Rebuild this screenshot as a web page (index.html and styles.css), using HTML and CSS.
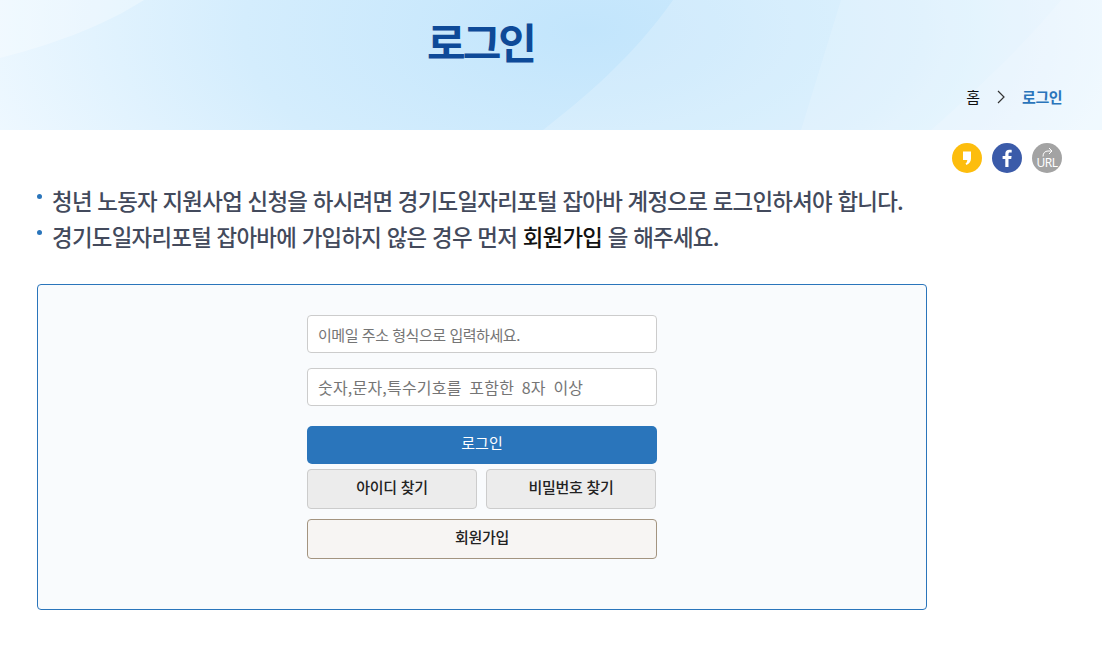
FILE: index.html
```html
<!DOCTYPE html>
<html lang="ko">
<head>
  <meta charset="UTF-8" />
  <title>로그인</title>
  <link rel="stylesheet" href="styles.css">
</head>
<body>
  <header class="banner">
    <svg class="banner-art" viewBox="0 0 1102 130" preserveAspectRatio="none" aria-hidden="true">
      <path d="M0 0H144C100 28 50 45 0 58Z" fill="#fff" fill-opacity="0.3"/>
      <path d="M543 130C585 97 632 58 673 0H1102V130Z" fill="#fff" fill-opacity="0.2"/>
      <path d="M801 130L841 0H1102V130Z" fill="#fff" fill-opacity="0.15"/>
      <path d="M931 130C970 95 1020 50 1061 0H1102V130Z" fill="#fff" fill-opacity="0.15"/>
    </svg>
    <div class="banner-inner">
      <h1>로그인</h1>
      <nav class="crumbs">
        <span class="crumb-home">홈</span>
        <svg class="crumb-sep" width="8" height="14" viewBox="0 0 8 14"><path d="M1 1l6 6-6 6" fill="none" stroke="#333" stroke-width="1.2"/></svg>
        <span class="crumb-now">로그인</span>
      </nav>
    </div>
  </header>

  <div class="share">
    <a class="share-btn kakao"><svg width="30" height="30" viewBox="0 0 30 30"><path d="M11 8.500h8v7c0 3-1.500 5-4.500 6.500l-1-1.500c1-.6 1.600-1.500 1.800-3.500H11z" fill="#fff"/></svg></a>
    <a class="share-btn fb"><svg width="30" height="30" viewBox="0 0 30 30"><path d="M16.500 24v-8h2.700l.4-3h-3.100v-1.900c0-.9.300-1.500 1.500-1.500h1.700V6.900c-.3 0-1.300-.1-2.400-.1-2.400 0-4 1.400-4 4.100V13h-2.700v3h2.700v8z" fill="#fff"/></svg></a>
    <a class="share-btn url">
      <svg class="url-arrow" width="11" height="10" viewBox="0 0 11 10"><path d="M1 9.500C1 6 3 4 6 4h4M7 1l3 3-3 3" fill="none" stroke="#fff" stroke-width="1"/></svg>
      <span>URL</span>
    </a>
  </div>

  <main class="content">
    <ul class="notice">
      <li>청년 노동자 지원사업 신청을 하시려면 경기도일자리포털 잡아바 계정으로 로그인하셔야 합니다.</li>
      <li>경기도일자리포털 잡아바에 가입하지 않은 경우 먼저 <b>회원가입</b> 을 해주세요.</li>
    </ul>

    <section class="login-box">
      <form class="login-form">
        <input class="field" type="text" placeholder="이메일 주소 형식으로 입력하세요.">
        <input class="field field-pw" type="password" placeholder="숫자,문자,특수기호를 포함한 8자 이상">
        <button class="btn btn-login" type="button">로그인</button>
        <div class="find-row">
          <button class="btn btn-find" type="button">아이디 찾기</button>
          <button class="btn btn-find" type="button">비밀번호 찾기</button>
        </div>
        <button class="btn btn-join" type="button">회원가입</button>
      </form>
    </section>
  </main>
</body>
</html>
```

FILE: styles.css
```css
body {
  margin: 0;
  background: #fff;
  font-family: "Noto Sans CJK KR", "Noto Sans", sans-serif;
  color: #434a5c;
}

.banner {
  position: relative;
  height: 130px;
  overflow: hidden;
  background: radial-gradient(ellipse 620px 300px at 585px 30px, #c2e5fc 0%, #d4edfd 55%, #eef8ff 100%);
  background-color: #eef8ff;
}

.banner-art {
  position: absolute;
  left: 0;
  top: 0;
  width: 100%;
  height: 100%;
}

.banner-inner {
  position: relative;
  height: 100%;
  padding: 0 40px 0 37px;
}

.banner h1 {
  width: 887px;
  margin: 0;
  padding-top: 11px;
  text-align: center;
  font-size: 42px;
  line-height: 60px;
  font-weight: 700;
  letter-spacing: -3px;
  color: #0e4a98;
}

.crumbs {
  display: flex;
  justify-content: flex-end;
  align-items: center;
  gap: 17px;
  margin-top: 15px;
  font-size: 15px;
  line-height: 22px;
}

.crumb-home {
  color: #111;
}

.crumb-now {
  color: #2a75bb;
  font-weight: 700;
  letter-spacing: -0.5px;
}

.share {
  display: flex;
  justify-content: flex-end;
  gap: 10px;
  padding: 13px 40px 0 0;
}

.share-btn {
  width: 30px;
  height: 30px;
  border-radius: 50%;
  display: flex;
  flex-direction: column;
  align-items: center;
  color: #fff;
}

.kakao { background: #fdbd0d; }
.fb { background: #3b5ba9; }
.url { background: #a3a3a3; }

.url-arrow {
  margin-top: 4px;
  display: block;
}

.url span {
  font-size: 12px;
  line-height: 12px;
  letter-spacing: -0.5px;
  font-family: "Noto Sans", sans-serif;
}

.content {
  padding: 0 37px;
}

.notice {
  list-style: none;
  margin: 9px 0 0;
  padding: 0;
}

.notice li {
  position: relative;
  padding-left: 15px;
  font-size: 22.4px;
  line-height: 36px;
  font-weight: 500;
  letter-spacing: -0.72px;
}

.notice li::before {
  content: "";
  position: absolute;
  left: 0;
  top: 12px;
  width: 5px;
  height: 5px;
  border-radius: 50%;
  background: #2a75bb;
}

.notice b {
  font-weight: 500;
  color: #111;
}

.login-box {
  box-sizing: border-box;
  width: 890px;
  height: 326px;
  margin-top: 30px;
  padding-top: 30px;
  border: 1px solid #2a75bb;
  border-radius: 4px;
  background: #f9fbfd;
}

.login-form {
  width: 350px;
  margin: 0 auto;
  display: flex;
  flex-direction: column;
}

.field {
  box-sizing: border-box;
  height: 38px;
  margin-bottom: 15px;
  padding: 0 10px;
  border: 1px solid #ccc;
  border-radius: 4px;
  background: #fff;
  font-family: inherit;
  font-size: 15px;
}

.field::placeholder {
  color: #757575;
  letter-spacing: -0.45px;
}

.field-pw {
  font-size: 16px;
}

.field-pw::placeholder {
  letter-spacing: 0.2px;
  word-spacing: 3px;
}

.btn {
  box-sizing: border-box;
  font-family: inherit;
  font-size: 15px;
  padding: 0 0 6px;
  border-radius: 4px;
  cursor: pointer;
}

.btn-login {
  height: 38px;
  margin-top: 5px;
  border: 0;
  border-radius: 5px;
  background: #2a75bb;
  color: #fff;
}

.find-row {
  display: flex;
  gap: 9px;
  margin-top: 5px;
}

.btn-find {
  width: 170px;
  height: 40px;
  border: 1px solid #ccc;
  background: #ececec;
  color: #222;
  font-weight: 500;
  letter-spacing: -0.3px;
}

.btn-join {
  height: 40px;
  margin-top: 10px;
  border: 1px solid #a39480;
  background: #f7f5f3;
  color: #222;
  font-weight: 500;
  letter-spacing: -0.3px;
}
```
